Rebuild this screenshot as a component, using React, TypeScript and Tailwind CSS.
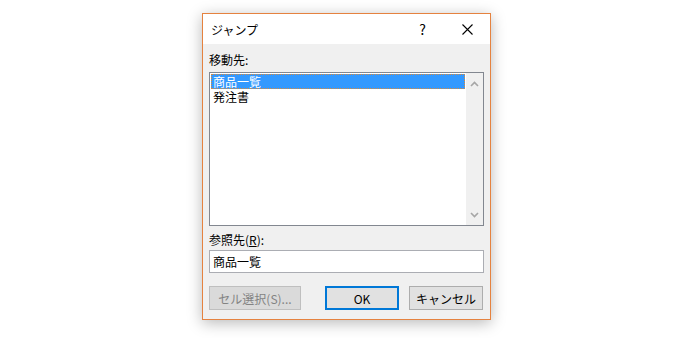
const font = "font-['Noto_Sans_CJK_JP','Noto_Sans',sans-serif]";

const Chevron = ({ down }: { down?: boolean }) => (
    <svg width="9" height="6" viewBox="0 0 9 6" className={down ? "rotate-180" : ""}>
        <path d="M1 5 L4.5 1.5 L8 5" fill="none" stroke="#a6a6a6" strokeWidth="1.6" />
    </svg>
);

const CloseIcon = () => (
    <svg width="11" height="11" viewBox="0 0 11 11">
        <path d="M0.5 0.5 L10.5 10.5 M10.5 0.5 L0.5 10.5" stroke="#000" strokeWidth="1.1" />
    </svg>
);

const items = ["商品一覧", "発注書"];

const App = () => {
    return (
        <div className={`w-[698px] h-[338px] bg-white pl-[202px] pt-[13px] text-[12px] text-black ${font}`}>
            <div className="w-[289px] h-[307px] flex flex-col bg-[#f0f0f0] border border-[#e5823f] shadow-[0_3px_14px_rgba(0,0,0,0.28)]">
                {/* タイトルバー */}
                <div className="h-[30px] bg-white flex items-center pl-[8px] shrink-0">
                    <span className="leading-[15px] mt-[1px]">ジャンプ</span>
                    <span className="ml-auto mr-[36px] text-[14px] leading-[15px]">?</span>
                    <div className="mr-[17px]">
                        <CloseIcon />
                    </div>
                </div>

                <div className="flex flex-col px-[6px]">
                    <div className="mt-[8px] leading-[15px]">移動先:</div>
                    <div className="mt-[5px] w-[275px] h-[154px] border border-[#828790] bg-white flex">
                        <div className="flex-1 p-[1px]">
                            {items.map((item, i) => (
                                <div
                                    key={item}
                                    className={`h-[15px] flex items-center pl-[2px] ${
                                        i === 0
                                            ? "bg-[#3399ff] text-white outline-1 outline-dotted -outline-offset-1 outline-[#d98a3d]"
                                            : ""
                                    }`}
                                >
                                    <span className="leading-[13px]">{item}</span>
                                </div>
                            ))}
                        </div>
                        <div className="w-[17px] bg-[#f0f0f0] flex flex-col items-center justify-between pt-[8px] pb-[7px]">
                            <Chevron />
                            <Chevron down />
                        </div>
                    </div>

                    <div className="mt-[6px] leading-[15px]">
                        参照先(<span className="underline">R</span>):
                    </div>
                    <div className="mt-[3px] w-[275px] h-[23px] border border-[#abadb3] bg-white flex items-center pl-[3px] leading-[15px]">
                        商品一覧
                    </div>

                    <div className="mt-[13px] flex">
                        <button className="w-[92px] h-[24px] border border-[#bfbfbf] bg-[#cccccc]/60 text-[#838383] leading-[15px]">
                            セル選択(S)...
                        </button>
                        <button className="ml-[24px] w-[74px] h-[24px] border-2 border-[#0078d7] bg-[#e1e1e1] leading-[15px]">
                            OK
                        </button>
                        <button className="ml-[10px] w-[74px] h-[24px] border border-[#adadad] bg-[#e1e1e1] leading-[15px]">
                            キャンセル
                        </button>
                    </div>
                </div>
            </div>
        </div>
    );
};

export default App;
